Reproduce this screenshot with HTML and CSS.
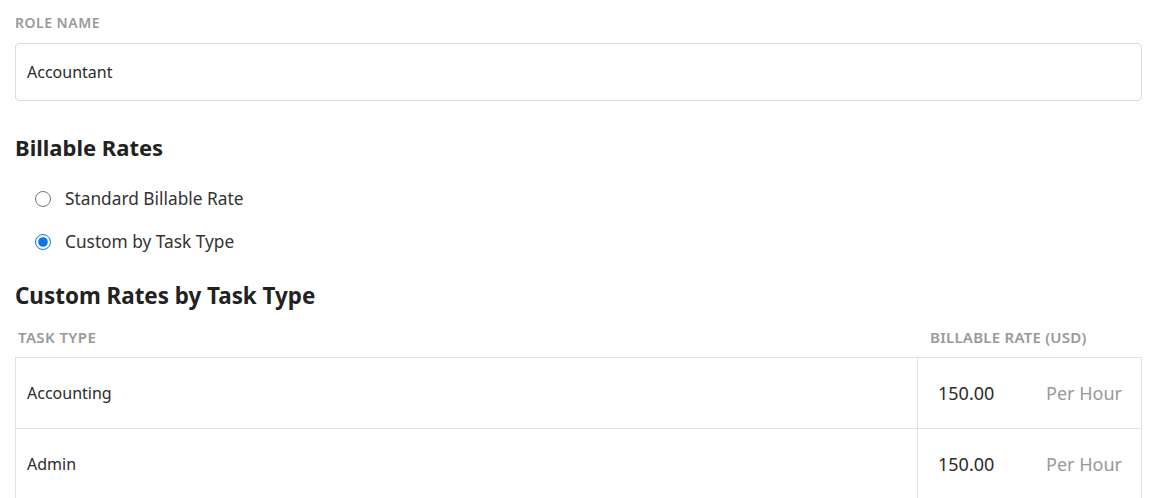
FILE: index.html
```html
<!DOCTYPE html>
<html>

<head>
    <title>Edit Role</title>
    <link rel="stylesheet" href="styles.css">
</head>

<body>
    <div class="field">
        <label class="field-label" for="roleName">Role Name</label>
        <input type="text" id="roleName" class="text-input" value="Accountant">
    </div>

    <h2 class="section-title">Billable Rates</h2>

    <div class="radio-list">
        <label class="radio-row">
            <input type="radio" name="rateMode" value="standard">
            <span>Standard Billable Rate</span>
        </label>
        <label class="radio-row">
            <input type="radio" name="rateMode" value="custom" checked>
            <span>Custom by Task Type</span>
        </label>
    </div>

    <h2 class="section-title rates-title">Custom Rates by Task Type</h2>

    <div class="rate-table">
        <div class="rate-head">
            <div class="col-task">Task Type</div>
            <div class="col-rate">Billable Rate (USD)</div>
        </div>
        <div class="rate-body">
            <div class="rate-row">
                <div class="col-task">Accounting</div>
                <div class="col-rate">
                    <span class="rate-amount">150.00</span>
                    <span class="rate-unit">Per Hour</span>
                </div>
            </div>
            <div class="rate-row">
                <div class="col-task">Admin</div>
                <div class="col-rate">
                    <span class="rate-amount">150.00</span>
                    <span class="rate-unit">Per Hour</span>
                </div>
            </div>
        </div>
    </div>
</body>

</html>
```

FILE: styles.css
```css
* {
    box-sizing: border-box;
}

body {
    margin: 0;
    padding: 14px 8px 0 15px;
    background-color: #ffffff;
    color: #2b2b2b;
    font-family: "Noto Sans", "Open Sans", sans-serif;
    font-size: 16px;
}

.field-label {
    display: block;
    font-size: 14px;
    font-weight: 600;
    letter-spacing: 0.5px;
    color: #999999;
    text-transform: uppercase;
    line-height: 18px;
    margin-bottom: 11px;
}

.text-input {
    width: 100%;
    height: 58px;
    padding: 0 11px;
    border: 1px solid #dddddd;
    border-radius: 4px;
    font-family: inherit;
    font-size: 16px;
    color: #2b2b2b;
}

.section-title {
    margin: 0;
    padding-top: 31px;
    font-size: 22px;
    font-weight: 700;
    line-height: 30px;
    color: #222222;
}

.radio-list {
    padding: 15px 0 0 20px;
}

.radio-row {
    display: flex;
    align-items: center;
    height: 43px;
    font-size: 17.3px;
    color: #333333;
}

.radio-row input {
    margin: 0 14px 0 0;
    width: 16px;
    height: 16px;
    accent-color: #0a74e8;
}

.rates-title {
    padding-top: 18px;
    font-size: 22.4px;
}

.rate-head {
    display: flex;
    font-size: 15px;
    font-weight: 600;
    letter-spacing: 0.25px;
    color: #999999;
    text-transform: uppercase;
    padding-top: 17px;
    line-height: 18px;
    height: 46px;
}

.rate-head .col-task {
    padding-left: 3px;
    letter-spacing: 0.4px;
}

.rate-head .col-rate {
    padding-left: 12px;
}

.rate-body {
    border: 1px solid #e3e3e3;
    border-bottom: none;
}

.rate-row {
    display: flex;
    height: 71px;
    border-bottom: 1px solid #e3e3e3;
}

.col-task {
    flex: 1;
}

.col-rate {
    width: 224px;
}

.rate-row .col-task {
    display: flex;
    align-items: center;
    padding-left: 11px;
    font-size: 16px;
}

.rate-row .col-rate {
    display: flex;
    align-items: center;
    justify-content: space-between;
    border-left: 1px solid #e3e3e3;
    padding: 0 19px 0 20px;
    font-size: 18px;
}

.rate-unit {
    color: #999999;
}
```
